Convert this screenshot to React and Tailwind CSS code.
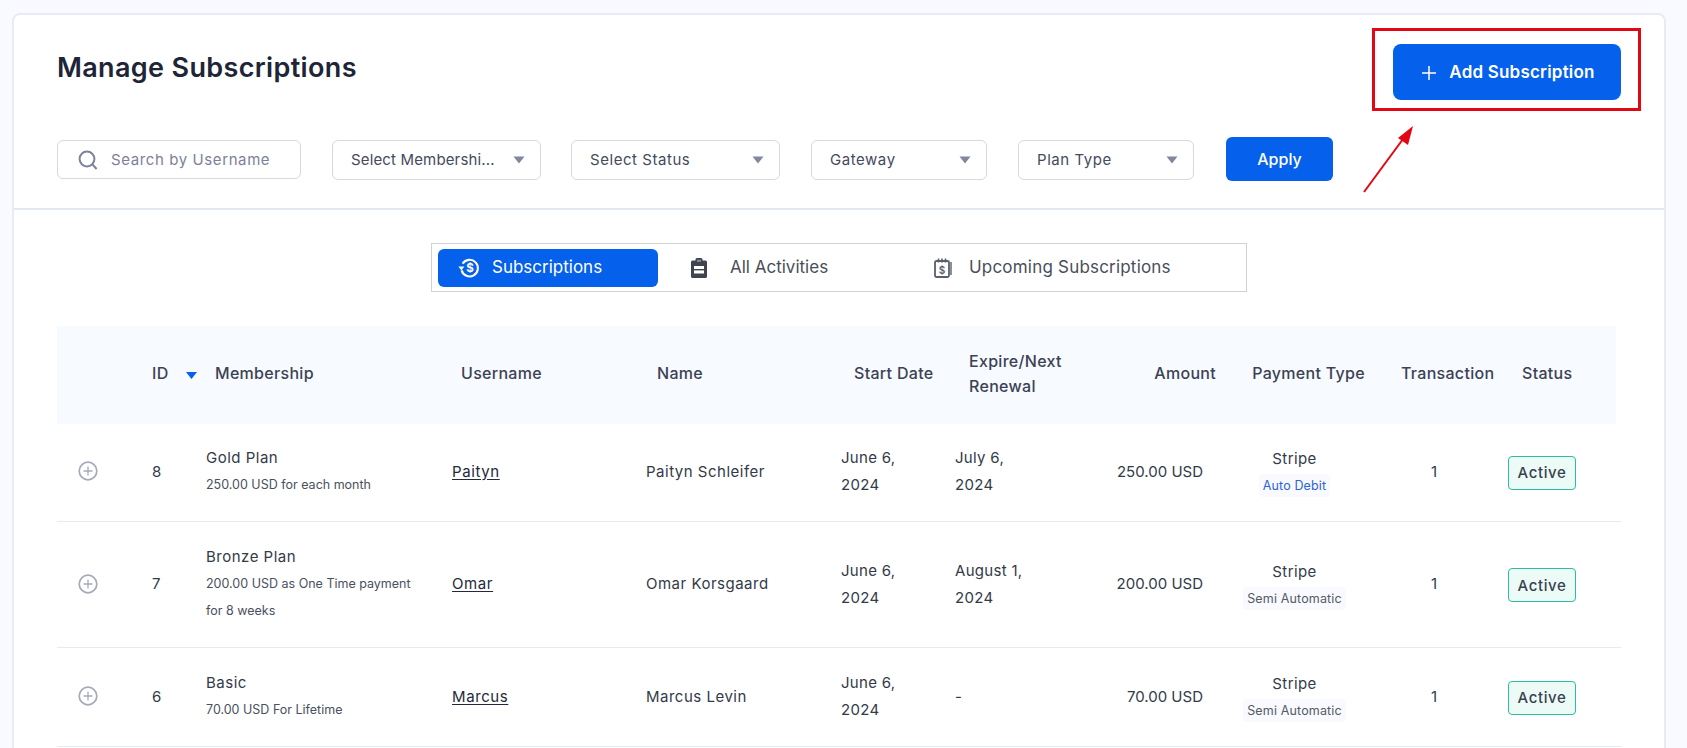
const F = "font-['Inter','Noto_Sans',sans-serif]";

function Caret({ className = "" }) {
  return (
    <svg width="12" height="8" viewBox="0 0 12 8" className={className}>
      <path d="M0.5 0.5H11.5L6 7.5Z" fill="#82869f" />
    </svg>
  );
}

function Select({ label, w, track = "tracking-[0.55px]" }) {
  return (
    <div className={`${w} h-10 flex items-center justify-between pl-[18px] pr-[15px] bg-white border border-[#d6d9e2] rounded-md`}>
      <span className={`text-[15px] pt-px ${track} text-[#454a5c] whitespace-nowrap`}>{label}</span>
      <Caret />
    </div>
  );
}

function SubsIcon() {
  return (
    <svg width="22" height="22" viewBox="0 0 22 22" fill="none" className="shrink-0">
      <path d="M4.6 6.6A8.3 8.3 0 1 1 3.6 13.4" stroke="#fff" strokeWidth="2.1" />
      <path d="M0.4 9.6h6l-3 4z" fill="#fff" />
      <text x="12" y="15.4" textAnchor="middle" fontSize="11.5" fontWeight="700" fill="#fff" fontFamily="Inter, sans-serif">$</text>
    </svg>
  );
}

function ClipIcon() {
  return (
    <svg width="16" height="20" viewBox="0 0 16 20" className="shrink-0">
      <path d="M1.5 2.5H4.5V1.5A1.5 1.5 0 0 1 6 0h4a1.5 1.5 0 0 1 1.5 1.5v1h3A1.5 1.5 0 0 1 16 4v14.5a1.5 1.5 0 0 1-1.5 1.5h-13A1.5 1.5 0 0 1 0 18.5V4a1.5 1.5 0 0 1 1.5-1.5Z" fill="#3f4450" />
      <rect x="6" y="1.8" width="4" height="2" fill="#8b8e97" />
      <rect x="3" y="8" width="10" height="7.5" fill="#fff" />
      <rect x="3" y="11" width="10" height="1.4" fill="#3f4450" />
    </svg>
  );
}

function CalIcon() {
  return (
    <svg width="18" height="20" viewBox="0 0 18 20" fill="none" className="shrink-0">
      <rect x="1" y="3" width="14" height="16" rx="1.5" stroke="#5a5f6b" strokeWidth="1.8" />
      <path d="M4.5 0.5v4M8 0.5v4M11.5 0.5v4" stroke="#5a5f6b" strokeWidth="1.6" />
      <path d="M17 4v13" stroke="#5a5f6b" strokeWidth="1.4" />
      <text x="8" y="15.5" textAnchor="middle" fontSize="10" fontWeight="600" fill="#5a5f6b" fontFamily="Inter, sans-serif">$</text>
    </svg>
  );
}

function PlusCircle() {
  return (
    <svg width="20" height="20" viewBox="0 0 20 20" fill="none" className="shrink-0">
      <circle cx="10" cy="10" r="8.8" stroke="#a6a9ba" strokeWidth="1.7" />
      <path d="M10 5.5v9M5.5 10h9" stroke="#a6a9ba" strokeWidth="1.3" />
    </svg>
  );
}

const rows = [
  { h: "h-[98px] pb-[3px]", id: "8", plan: "Gold Plan", desc: ["250.00 USD for each month"], user: "Paityn", name: "Paityn Schleifer", exp: ["July 6,", "2024"], amt: "250.00 USD", type: "Auto Debit", blue: true },
  { h: "h-[126px] pb-[2px]", id: "7", plan: "Bronze Plan", desc: ["200.00 USD as One Time payment", "for 8 weeks"], user: "Omar", name: "Omar Korsgaard", exp: ["August 1,", "2024"], amt: "200.00 USD", type: "Semi Automatic" },
  { h: "h-[99px] pb-[2px]", id: "6", plan: "Basic", desc: ["70.00 USD For Lifetime"], user: "Marcus", name: "Marcus Levin", exp: ["-"], amt: "70.00 USD", type: "Semi Automatic" },
];

const rowGrid = "grid-cols-[95px_54px_246px_195px_194px_114px_105px_143px_183px_96px_139px]";

export default function App() {
  return (
    <div className={`${F} h-[748px] overflow-hidden bg-[#f8faff] pt-[13px] pl-3 pr-[21px] text-[#262c3a]`}>
      <div className="h-[800px] bg-white border-2 border-[#e6ebf4] rounded-lg">
        <div className="relative h-[195px] border-b-2 border-[#e3e7f2]">
          <div className="flex items-start justify-between pl-[43px] pr-[43px] pt-[29px]">
            <h1 className="mt-[4px] text-[27px] leading-[40px] font-semibold tracking-[0.35px] text-[#1d2536]">Manage Subscriptions</h1>
            <button className="w-[228px] h-14 pt-[2px] pl-[3px] flex items-center justify-center gap-[13px] bg-[#0560eb] rounded-lg text-white text-[17px] font-semibold tracking-[0.2px]">
              <svg width="14" height="14" viewBox="0 0 14 14"><path d="M7 0v14M0 7h14" stroke="#fff" strokeWidth="1.5" /></svg>
              Add Subscription
            </button>
          </div>
          <div className="absolute left-[43px] top-[124px] flex items-center">
            <div className="w-[244px] h-[39px] -mt-px flex items-center gap-[13px] pl-5 border border-[#d6d9e2] rounded-md">
              <svg width="20" height="20" viewBox="0 0 20 20" fill="none" className="shrink-0">
                <circle cx="9" cy="9" r="7.4" stroke="#7d819c" strokeWidth="2" />
                <path d="M14.4 14.4l4.2 4.6" stroke="#7d819c" strokeWidth="2" />
              </svg>
              <span className="text-[15px] pt-px tracking-[0.6px] text-[#7d8198] whitespace-nowrap">Search by Username</span>
            </div>
            <div className="ml-[31px]"><Select label="Select Membershi..." w="w-[209px]" track="tracking-[0.15px]" /></div>
            <div className="ml-[30px]"><Select label="Select Status" w="w-[209px]" /></div>
            <div className="ml-[31px]"><Select label="Gateway" w="w-[176px]" /></div>
            <div className="ml-[31px]"><Select label="Plan Type" w="w-[176px]" /></div>
            <button className="ml-[32px] -mt-[2px] w-[107px] h-11 bg-[#0560eb] rounded-md text-white text-[16px] font-medium">Apply</button>
          </div>
          <div className="absolute left-[1358px] top-[13px] w-[269px] h-[83px] border-[3px] border-[#e30613]" />
          <svg width="60" height="72" viewBox="0 0 60 72" className="absolute left-[1348px] top-[108px]">
            <path d="M2 69L44 12" stroke="#e30613" strokeWidth="2" fill="none" />
            <path d="M51 3L46 22L36 15Z" fill="#e30613" />
          </svg>
        </div>

        <div className="pt-[33px] flex justify-center">
          <div className="w-[816px] h-[49px] border border-[#cfd1d5] flex items-center pl-[6px] pr-[6px]">
            <div className="w-[220px] h-[38px] bg-[#0560eb] rounded-md flex items-center gap-[12px] pl-5 text-white text-[17px]">
              <SubsIcon />Subscriptions
            </div>
            <div className="w-[243px] flex items-center gap-[23px] pl-[33px] text-[17px] text-[#4a4e5a]">
              <ClipIcon />All Activities
            </div>
            <div className="flex items-center gap-[17px] pl-[33px] text-[17px] tracking-[0.2px] text-[#4a4e5a] whitespace-nowrap">
              <CalIcon />Upcoming Subscriptions
            </div>
          </div>
        </div>

        <div className="mt-[34px] ml-[43px] w-[1564px]">
          <div className="w-[1559px] h-[98px] pb-[3px] bg-[#f7faff] grid grid-cols-[95px_63px_246px_196px_197px_115px_100px_147px_185px_121px_94px] items-center text-[16px] tracking-[0.3px] font-medium leading-[25px] text-[#3b4254]">
            <div />
            <div className="flex items-center">ID<svg width="11" height="7" viewBox="0 0 11 7" className="ml-[17px] mt-[4px]"><path d="M0 0H11L5.5 7Z" fill="#0560eb" /></svg></div>
            <div>Membership</div>
            <div>Username</div>
            <div>Name</div>
            <div>Start Date</div>
            <div className="whitespace-nowrap">Expire/Next<br />Renewal</div>
            <div className="text-right">Amount</div>
            <div className="text-center whitespace-nowrap">Payment Type</div>
            <div className="whitespace-nowrap">Transaction</div>
            <div>Status</div>
          </div>
          {rows.map((r) => (
            <div key={r.id} className={`${r.h} grid ${rowGrid} items-center border-b border-[#e7eaf2] text-[15px] leading-[27px] text-[#333a48]`}>
              <div className="pl-[21px]"><PlusCircle /></div>
              <div>{r.id}</div>
              <div>
                <div className="tracking-[0.5px]">{r.plan}</div>
                {r.desc.map((d) => <div key={d} className="text-[12.5px] text-[#4a505e] whitespace-nowrap">{d}</div>)}
              </div>
              <div className="underline underline-offset-2 tracking-[0.6px] text-[#23293a]">{r.user}</div>
              <div className="whitespace-nowrap tracking-[0.5px] -ml-px">{r.name}</div>
              <div className="tracking-[0.3px]">June 6,<br />2024</div>
              <div className="tracking-[0.3px]">{r.exp.map((e) => <div key={e}>{e}</div>)}</div>
              <div className="text-right whitespace-nowrap">{r.amt}</div>
              <div className="flex flex-col items-center">
                <div className="tracking-[0.4px]">Stripe</div>
                <div className={`px-1 text-[12.5px] leading-[23px] mt-[2px] rounded bg-[#f8faff] tracking-[0.15px] whitespace-nowrap ${r.blue ? "text-[#2f62d8]" : "text-[#555b66]"}`}>{r.type}</div>
              </div>
              <div className="text-center">1</div>
              <div className="pl-[26px] pt-[3px]">
                <div className="w-[68px] h-[34px] flex items-center justify-center border border-[#2bbd9f] bg-[#edfbf7] rounded text-[15px] font-medium tracking-[0.6px] text-[#39414f]">Active</div>
              </div>
            </div>
          ))}
        </div>
      </div>
    </div>
  );
}
